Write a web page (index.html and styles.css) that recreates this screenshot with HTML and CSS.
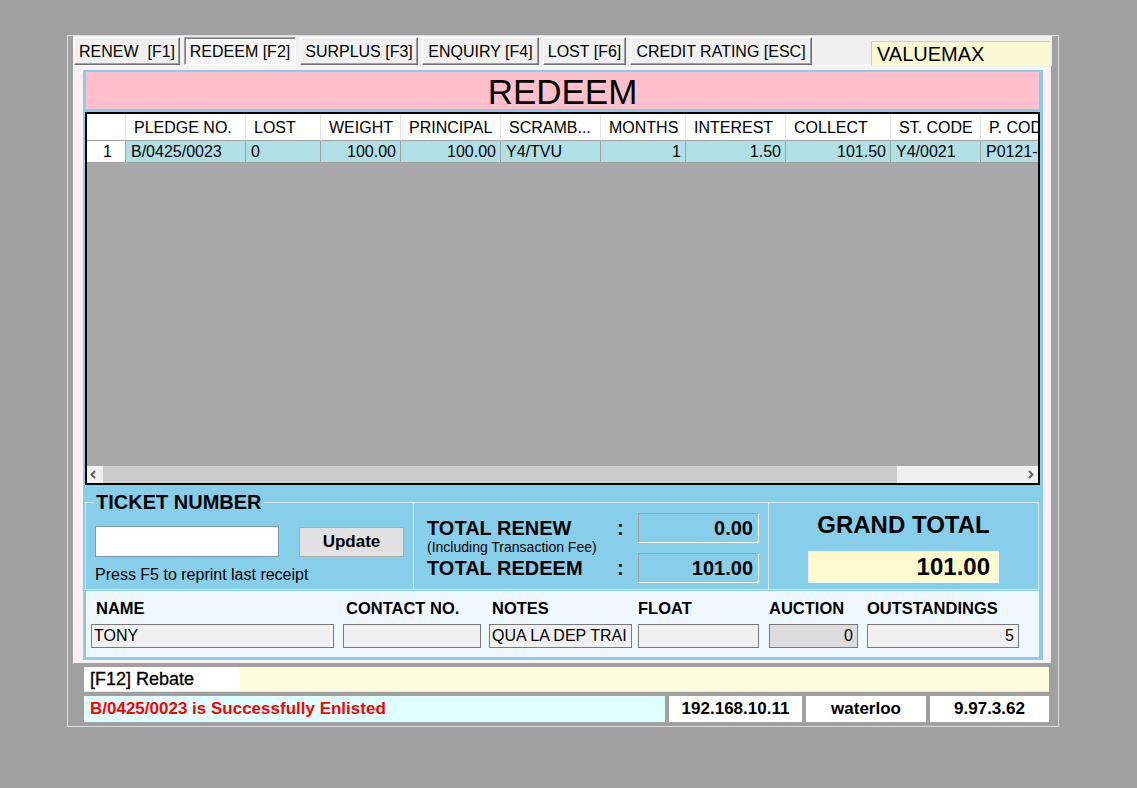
FILE: index.html
```html
<!DOCTYPE html>
<html>
<head>
<meta charset="utf-8">
<title>REDEEM</title>
<link rel="stylesheet" href="styles.css">
</head>
<body>
<div class="window">
  <div class="tabctl">
    <div class="tabstrip">
      <div class="tab w-renew">RENEW&nbsp;&nbsp;[F1]</div>
      <div class="tab w-redeem active">REDEEM [F2]</div>
      <div class="tab w-surplus">SURPLUS [F3]</div>
      <div class="tab w-enquiry">ENQUIRY [F4]</div>
      <div class="tab w-lost">LOST [F6]</div>
      <div class="tab w-credit">CREDIT RATING [ESC]</div>
      <div class="brand">VALUEMAX</div>
    </div>
    <div class="tabpage">
      <div class="page">
        <div class="panel">
          <div class="title">REDEEM</div>
          <div class="grid">
            <div class="gridbody">
              <div class="row head">
                <div class="c"></div>
                <div class="c">PLEDGE NO.</div>
                <div class="c">LOST</div>
                <div class="c">WEIGHT</div>
                <div class="c">PRINCIPAL</div>
                <div class="c">SCRAMB...</div>
                <div class="c">MONTHS</div>
                <div class="c">INTEREST</div>
                <div class="c">COLLECT</div>
                <div class="c">ST. CODE</div>
                <div class="c">P. CODE</div>
              </div>
              <div class="row data">
                <div class="c rh">1</div>
                <div class="c">B/0425/0023</div>
                <div class="c">0</div>
                <div class="c num">100.00</div>
                <div class="c num">100.00</div>
                <div class="c">Y4/TVU</div>
                <div class="c num">1</div>
                <div class="c num">1.50</div>
                <div class="c num">101.50</div>
                <div class="c">Y4/0021</div>
                <div class="c">P0121-0001</div>
              </div>
            </div>
            <div class="hscroll">
              <div class="sbtn"><svg width="16" height="17" viewBox="0 0 16 17"><polyline points="8,5 4.5,8.5 8,12" fill="none" stroke="#606060" stroke-width="2"/></svg></div>
              <div class="thumb"></div>
              <div class="strack"></div>
              <div class="sbtn"><svg width="16" height="17" viewBox="0 0 16 17"><polyline points="7,5 10.5,8.5 7,12" fill="none" stroke="#606060" stroke-width="2"/></svg></div>
            </div>
          </div>
          <div class="summary">
            <fieldset class="group">
              <legend>TICKET NUMBER</legend>
              <div class="cols">
                <div class="col col-ticket">
                  <div class="ticket-row">
                    <div class="tinput"></div>
                    <div class="btn">Update</div>
                  </div>
                  <div class="hint">Press F5 to reprint last receipt</div>
                </div>
                <div class="col col-totals">
                  <div class="tlabel r1">TOTAL RENEW<div class="sub">(Including Transaction Fee)</div></div>
                  <div class="colon r1">:</div>
                  <div class="tbox r1">0.00</div>
                  <div class="tlabel r3">TOTAL REDEEM</div>
                  <div class="colon r3">:</div>
                  <div class="tbox r3">101.00</div>
                </div>
                <div class="col col-grand">
                  <div class="glabel">GRAND TOTAL</div>
                  <div class="gbox">101.00</div>
                </div>
              </div>
            </fieldset>
          </div>
          <div class="info">
            <div class="field">
              <div class="flabel ind5">NAME</div>
              <div class="finput w-name">TONY</div>
            </div>
            <div class="field">
              <div class="flabel ind3">CONTACT NO.</div>
              <div class="finput w-contact"></div>
            </div>
            <div class="field">
              <div class="flabel ind3">NOTES</div>
              <div class="finput w-notes">QUA LA DEP TRAI</div>
            </div>
            <div class="field">
              <div class="flabel">FLOAT</div>
              <div class="finput w-float"></div>
            </div>
            <div class="field">
              <div class="flabel">AUCTION</div>
              <div class="finput w-auction readonly right">0</div>
            </div>
            <div class="field">
              <div class="flabel">OUTSTANDINGS</div>
              <div class="finput w-out right">5</div>
            </div>
          </div>
        </div>
      </div>
    </div>
  </div>
  <div class="rebate">
    <div class="rebate-key">[F12] Rebate</div>
    <div class="rebate-fill"></div>
  </div>
  <div class="status">
    <div class="s-msg">B/0425/0023 is Successfully Enlisted</div>
    <div class="s-cell s-ip">192.168.10.11</div>
    <div class="s-cell s-branch">waterloo</div>
    <div class="s-cell s-ver">9.97.3.62</div>
  </div>
</div>
</body>
</html>
```
FILE: styles.css
```css
* { box-sizing: border-box; }
body {
  margin: 0;
  background: #a0a0a0;
  font-family: "Liberation Sans", Arial, sans-serif;
  color: #000;
}
.window {
  margin: 35px 0 0 67px;
  width: 992px;
  height: 692px;
  border: 1px solid #dcdcdc;
  background: #a0a0a0;
  padding-left: 5px;
}
.tabctl {
  width: 979px;
  background: #f0f0f0;
}
.tabstrip {
  height: 29px;
  display: flex;
  align-items: flex-start;
  padding: 1px 2px 0 1px;
}
.tab {
  height: 28px;
  margin-right: 4px;
  padding-top: 2px;
  display: flex;
  align-items: center;
  justify-content: center;
  font-size: 16px;
  white-space: nowrap;
  background: #f0f0f0;
  border: 1px solid;
  border-color: #ffffff #6d6d6d #6d6d6d #ffffff;
  box-shadow: inset -1px -1px 0 #a0a0a0;
}
.tab.active {
  background: #f6f6f6;
  border-color: #a0a0a0 #ffffff #ffffff #a0a0a0;
  box-shadow: inset 1px 1px 0 #808080;
}
.w-renew { width: 106px; }
.w-redeem { width: 112px; }
.w-surplus { width: 118px; }
.w-enquiry { width: 117px; }
.w-lost { width: 83px; }
.w-credit { width: 182px; }
.brand {
  margin: 4px 0 0 auto;
  width: 179px;
  height: 25px;
  background: #fafad2;
  border: 1px solid;
  border-color: #cfcfcf #f4f4f4 #f4f4f4 #cfcfcf;
  font-size: 20px;
  line-height: 24px;
  padding-left: 5px;
}
.tabpage {
  height: 599px;
  border: 1px solid;
  border-color: #ffffff #a0a0a0 #a0a0a0 #ffffff;
  padding: 1px 1px 1px 2px;
}
.page {
  height: 100%;
  background: #fff0f5;
  padding: 3px 7px 2px 7px;
}
.panel {
  height: 100%;
  background: #87ceeb;
  padding: 2px 3px 3px 2px;
  display: flex;
  flex-direction: column;
}
.title {
  margin: 0 1px;
  height: 37px;
  flex: none;
  background: #ffc0cb;
  text-align: center;
  font-size: 35px;
  line-height: 39px;
}
.grid {
  margin-top: 3px;
  height: 373px;
  flex: none;
  border: 2px solid #000;
  background: #a9a9a9;
  display: flex;
  flex-direction: column;
}
.gridbody {
  flex: 1;
  overflow: hidden;
}
.row {
  display: grid;
  grid-template-columns: 39px 120px 75px 80px 100px 100px 85px 100px 105px 90px 100px;
  width: max-content;
  font-size: 16px;
  white-space: nowrap;
}
.row .c { overflow: hidden; }
.head .c {
  height: 27px;
  line-height: 27px;
  background: #fff;
  border-right: 1px solid #e3e3e3;
  border-bottom: 1px solid #a0a0a0;
  padding-left: 8px;
}
.data .c {
  height: 22px;
  line-height: 22px;
  background: #b0e0e6;
  border-right: 1px solid #a0a0a0;
  border-bottom: 1px solid #a0a0a0;
  padding: 0 4px 0 5px;
}
.data .c.rh {
  background: #fff;
  text-align: right;
  padding-right: 13px;
}
.data .c.num { text-align: right; }
.hscroll {
  height: 17px;
  flex: none;
  display: flex;
  background: #f0f0f0;
}
.sbtn { width: 16px; height: 17px; }
.sbtn svg { display: block; }
.thumb { width: 794px; height: 17px; background: #cdcdcd; }
.strack { flex: 1; }
.summary {
  margin-top: 1px;
  height: 104px;
  flex: none;
  padding-top: 4px;
}
.group {
  margin: 0 1px 0 0;
  padding: 0;
  min-width: 0;
  border: 1px solid #dbe7ee;
}
.group legend {
  margin-left: 8px;
  padding: 0 2px;
  font-size: 20px;
  font-weight: bold;
  line-height: 24px;
}
.cols {
  margin-top: -11px;
  height: 86px;
  display: grid;
  grid-template-columns: 328px 355px 1fr;
}
.col-ticket {
  border-right: 1px solid #dbe7ee;
  padding: 23px 0 0 9px;
}
.ticket-row {
  display: flex;
  align-items: flex-start;
  gap: 20px;
}
.tinput {
  width: 184px;
  height: 31px;
  background: #fff;
  border: 1px solid #7a99bb;
}
.btn {
  margin-top: 1px;
  width: 105px;
  height: 30px;
  background: #e1e1e1;
  border: 1px solid #adadad;
  font-size: 17px;
  font-weight: bold;
  text-align: center;
  line-height: 28px;
}
.hint {
  margin-top: 9px;
  font-size: 16px;
  line-height: 18px;
}
.col-totals {
  border-right: 1px solid #dbe7ee;
  padding: 10px 0 0 13px;
  display: grid;
  grid-template-columns: 190px 21px 121px;
  grid-template-rows: 30px 10px 30px;
  align-content: start;
}
.r1 { grid-row: 1; }
.r3 { grid-row: 3; }
.tlabel {
  grid-column: 1;
  padding-top: 4px;
  font-size: 20px;
  font-weight: bold;
  line-height: 22px;
  white-space: nowrap;
}
.tlabel .sub {
  font-size: 14px;
  font-weight: normal;
  line-height: 16px;
}
.colon {
  grid-column: 2;
  font-size: 20px;
  font-weight: bold;
  line-height: 30px;
}
.tbox {
  grid-column: 3;
  height: 30px;
  background: #87ceeb;
  border: 1px solid;
  border-color: #a0a0a0 #ffffff #ffffff #a0a0a0;
  text-align: right;
  padding-right: 5px;
  font-size: 20px;
  font-weight: bold;
  line-height: 28px;
}
.col-grand {
  padding-top: 8px;
  text-align: center;
}
.glabel {
  font-size: 24px;
  font-weight: bold;
  line-height: 28px;
}
.gbox {
  margin: 12px auto 0;
  width: 191px;
  height: 32px;
  background: #fffacd;
  border: 1px solid;
  border-color: #f0f0f0 #ffffff #ffffff #f0f0f0;
  text-align: right;
  padding-right: 8px;
  font-size: 24px;
  font-weight: bold;
  line-height: 30px;
}
.info {
  margin: 1px 1px 0 1px;
  height: 66px;
  flex: none;
  background: #f0f8ff;
  padding: 7px 0 0 5px;
  display: grid;
  grid-template-columns: 252px 146px 149px 131px 98px 152px;
}
.flabel {
  font-size: 16.5px;
  font-weight: bold;
  line-height: 20px;
  margin-bottom: 6px;
  white-space: nowrap;
}
.ind5 { padding-left: 5px; }
.ind3 { padding-left: 3px; }
.finput {
  height: 24px;
  background: #f0f0f0;
  border: 1px solid #7a7a7a;
  font-size: 16px;
  line-height: 22px;
  padding: 0 4px 0 2px;
  white-space: nowrap;
  overflow: hidden;
}
.finput.readonly { background: #dcdcdc; }
.finput.right { text-align: right; }
.w-name { width: 243px; }
.w-contact { width: 138px; }
.w-notes { width: 143px; }
.w-float { width: 121px; }
.w-auction { width: 89px; }
.w-out { width: 152px; }
.rebate {
  margin: 3px 0 0 11px;
  width: 965px;
  height: 25px;
  display: flex;
  border-bottom: 1px solid #e6e6e6;
}
.rebate-key {
  width: 155px;
  background: #fff;
  font-size: 18px;
  line-height: 24px;
  padding-left: 6px;
  -webkit-text-stroke: 0.3px #000;
}
.rebate-fill {
  flex: 1;
  background: #ffffe0;
}
.status {
  margin: 4px 0 0 11px;
  width: 965px;
  height: 26px;
  display: flex;
  gap: 4px;
  font-size: 17px;
  font-weight: bold;
  line-height: 26px;
}
.s-msg {
  width: 581px;
  background: #e0ffff;
  color: #ff0000;
  padding-left: 6px;
}
.s-cell {
  background: #fff;
  text-align: center;
}
.s-ip { width: 133px; }
.s-branch { width: 120px; }
.s-ver { width: 119px; }
```
